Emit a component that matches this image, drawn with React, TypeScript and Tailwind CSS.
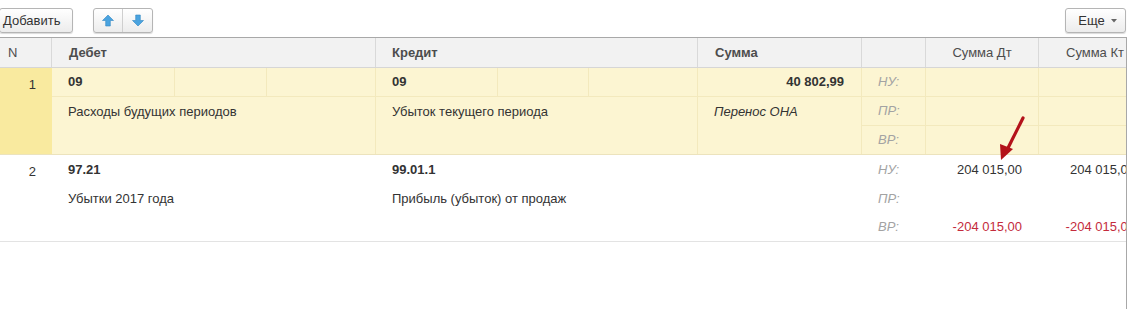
import React from "react";

const cols = [52, 324, 322, 164, 64, 113, 113];

function Btn({ children, className = "" }: { children: React.ReactNode; className?: string }) {
  return (
    <div
      className={
        "h-[25px] flex items-center border border-[#b5b5b5] rounded-[3px] bg-gradient-to-b from-white to-[#ececec] shadow-[0_1px_1px_rgba(0,0,0,0.15)] text-[13px] text-[#333] " +
        className
      }
    >
      {children}
    </div>
  );
}

function UpArrow() {
  return (
    <svg width="12" height="13" viewBox="0 0 12 13">
      <path d="M6 1 L11.5 6.5 L8.3 6.5 L8.3 12 L3.7 12 L3.7 6.5 L0.5 6.5 Z" fill="#4aa3df" stroke="#2f86c2" strokeWidth="0.6" />
    </svg>
  );
}
function DownArrow() {
  return (
    <svg width="12" height="13" viewBox="0 0 12 13">
      <path d="M6 12 L11.5 6.5 L8.3 6.5 L8.3 1 L3.7 1 L3.7 6.5 L0.5 6.5 Z" fill="#4aa3df" stroke="#2f86c2" strokeWidth="0.6" />
    </svg>
  );
}

type Cell = { t?: string; bold?: boolean; italic?: boolean; right?: boolean; red?: boolean; label?: boolean };

function Sub({ c, h, border, split, sel }: { c?: Cell; h: string; border?: boolean; split?: number[]; sel?: boolean }) {
  const cls =
    "flex items-center whitespace-nowrap overflow-hidden px-[16px] " +
    h +
    (border ? " border-b border-[#f3e9bd]" : "") +
    (c?.right ? " justify-end pr-[17px]" : "") +
    (c?.bold ? " font-bold" : "") +
    (c?.italic ? " italic" : "") +
    (c?.label ? " italic text-[#a3a3a3]" : c?.red ? " text-[#c42b3c]" : " text-[#333]");
  if (split && sel) {
    return (
      <div className={"flex " + h + (border ? " border-b border-[#f3e9bd]" : "")}>
        {split.map((w, i) => (
          <div
            key={i}
            style={{ width: w }}
            className={
              "flex items-center px-[16px] font-bold text-[#333] " + (i < split.length - 1 ? "border-r border-[#f3e9bd]" : "")
            }
          >
            {i === 0 ? c?.t : ""}
          </div>
        ))}
      </div>
    );
  }
  return <div className={cls}>{c?.t ?? ""}</div>;
}

function Row({ n, data, sel }: { n: string; data: Cell[][]; sel?: boolean }) {
  const splits: (number[] | undefined)[] = [undefined, [123, 93, 108], [122, 92, 108], undefined, undefined, undefined, undefined];
  return (
    <div className={"flex border-b " + (sel ? "bg-[#fcf5d2] border-[#ece3bd]" : "bg-white border-[#e3e3e3]")}>
      <div
        style={{ width: cols[0] }}
        className={"flex justify-end pr-[16px] pt-[7px] text-[#333] h-[86px] " + (sel ? "bg-[#f9ea9f]" : "")}
      >
        {n}
      </div>
      {data.map((col, i) => (
        <div
          key={i}
          style={{ width: cols[i + 1] }}
          className={"flex flex-col shrink-0 " + (sel && i < data.length - 1 ? "border-r border-[#f3e9bd]" : "")}
        >
          <Sub c={col[0]} h="h-[29px]" border={sel} split={splits[i + 1]} sel={sel} />
          <Sub c={col[1]} h="h-[29px]" border={sel && i >= 3} />
          <Sub c={col[2]} h="h-[28px]" />
        </div>
      ))}
    </div>
  );
}

export default function App() {
  const row1: Cell[][] = [
    [{ t: "09", bold: true }, { t: "Расходы будущих периодов" }, {}],
    [{ t: "09", bold: true }, { t: "Убыток текущего периода" }, {}],
    [{ t: "40 802,99", bold: true, right: true }, { t: "Перенос ОНА", italic: true }, {}],
    [{ t: "НУ:", label: true }, { t: "ПР:", label: true }, { t: "ВР:", label: true }],
    [{}, {}, {}],
    [{}, {}, {}],
  ];
  const row2: Cell[][] = [
    [{ t: "97.21", bold: true }, { t: "Убытки 2017 года" }, {}],
    [{ t: "99.01.1", bold: true }, { t: "Прибыль (убыток) от продаж" }, {}],
    [{}, {}, {}],
    [{ t: "НУ:", label: true }, { t: "ПР:", label: true }, { t: "ВР:", label: true }],
    [{ t: "204 015,00", right: true }, {}, { t: "-204 015,00", right: true, red: true }],
    [{ t: "204 015,00", right: true }, {}, { t: "-204 015,00", right: true, red: true }],
  ];
  const headers: { t: string; bold?: boolean; align: string }[] = [
    { t: "N", align: "justify-start pl-[8px]" },
    { t: "Дебет", bold: true, align: "justify-start pl-[17px]" },
    { t: "Кредит", bold: true, align: "justify-start pl-[16px]" },
    { t: "Сумма", bold: true, align: "justify-start pl-[17px]" },
    { t: "", align: "" },
    { t: "Сумма Дт", align: "justify-center" },
    { t: "Сумма Кт", align: "justify-center" },
  ];
  return (
    <div className="w-[1136px] h-[309px] bg-white overflow-hidden text-[13px]" style={{ fontFamily: '"Liberation Sans", Arial, sans-serif' }}>
      <div className="h-[37px] flex items-start pt-[8px] pr-[10px]">
        <Btn className="ml-[-1px] w-[74px] pl-[3px]">Добавить</Btn>
        <Btn className="ml-[20px] w-[60px]">
          <div className="w-[29px] h-full flex items-center justify-center border-r border-[#cfcfcf]">
            <UpArrow />
          </div>
          <div className="flex-1 h-full flex items-center justify-center">
            <DownArrow />
          </div>
        </Btn>
        <div className="flex-1" />
        <Btn className="w-[61px] justify-center gap-[6px] pl-[4px]">
          <span>Еще</span>
          <svg width="6" height="4" viewBox="0 0 6 4">
            <path d="M0 0 L6 0 L3 3.5 Z" fill="#666" />
          </svg>
        </Btn>
      </div>
      <div className="relative w-[1127px] h-[272px] border-t border-r border-[#a8a8a8] overflow-hidden">
        <div className="flex h-[30px] bg-[#f2f2f2] border-b border-[#d6d6d6] text-[#4d4d4d] w-max">
          {headers.map((h, i) => (
            <div
              key={i}
              style={{ width: cols[i] }}
              className={"flex items-center shrink-0 border-r border-[#d9d9d9] " + h.align + (h.bold ? " font-bold" : "")}
            >
              {h.t}
            </div>
          ))}
        </div>
        <div className="w-max">
          <Row n="1" data={row1} sel />
          <Row n="2" data={row2} />
        </div>
        <svg className="absolute left-[996px] top-[78px]" width="34" height="46" viewBox="0 0 34 46">
          <path d="M27 2 L12 32" stroke="#b3121a" strokeWidth="3.2" strokeLinecap="round" />
          <path d="M5 44 L4 28 L17 33 Z" fill="#b3121a" />
        </svg>
      </div>
    </div>
  );
}
